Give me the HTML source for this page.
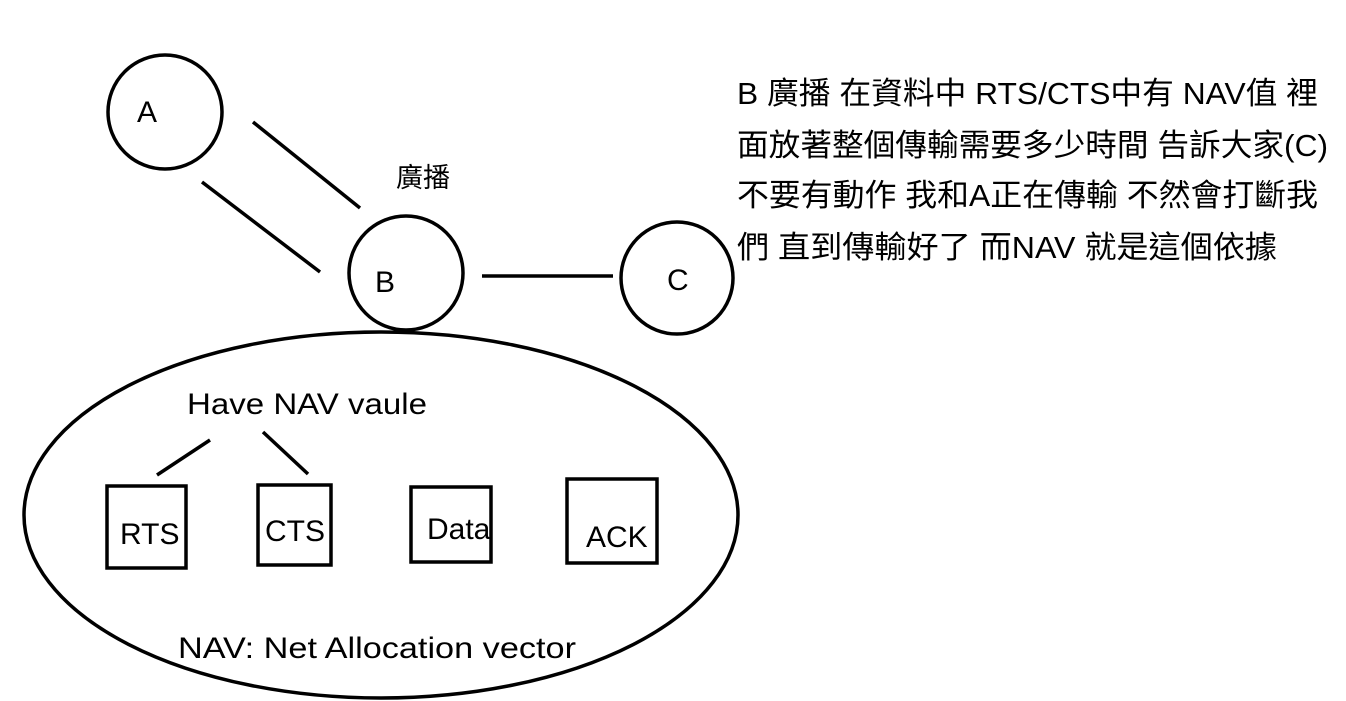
<!DOCTYPE html>
<html><head><meta charset="utf-8"><style>
html,body{margin:0;padding:0;background:#fff;width:1346px;height:701px;overflow:hidden}
svg text{font-family:"Liberation Sans","Noto Sans CJK TC",sans-serif;fill:#000}
</style></head><body>
<svg width="1346" height="701" viewBox="0 0 1346 701" xmlns="http://www.w3.org/2000/svg">
<g fill="none" stroke="#000" stroke-width="3.5">
<circle cx="165" cy="112" r="57"/>
<circle cx="406" cy="273" r="57"/>
<circle cx="677" cy="278" r="56"/>
<ellipse cx="381" cy="515" rx="357" ry="183"/>
<line x1="253" y1="122" x2="360" y2="208"/>
<line x1="202" y1="182" x2="320" y2="272"/>
<line x1="482" y1="276" x2="613" y2="276"/>
<line x1="210" y1="440" x2="157" y2="475"/>
<line x1="263" y1="432" x2="308" y2="474"/>
<rect x="107" y="486" width="79" height="82"/>
<rect x="258" y="485" width="73" height="80"/>
<rect x="411" y="487" width="80" height="75"/>
<rect x="567" y="479" width="90" height="84"/>
</g>
<g font-size="30">
<text x="137" y="122">A</text>
<text x="375" y="292">B</text>
<text x="667" y="290">C</text>
<text x="396" y="187" font-size="27">廣播</text>
<text x="187" y="414" textLength="240" lengthAdjust="spacingAndGlyphs">Have NAV vaule</text>
<text x="120" y="544">RTS</text>
<text x="265" y="541">CTS</text>
<text x="427" y="539">Data</text>
<text x="586" y="547">ACK</text>
<text x="178" y="658" textLength="398" lengthAdjust="spacingAndGlyphs">NAV: Net Allocation vector</text>
</g>
<g font-size="31">
<text x="737" y="104" textLength="581" lengthAdjust="spacingAndGlyphs">B 廣播  在資料中 RTS/CTS中有 NAV值 裡</text>
<text x="737" y="156" textLength="591" lengthAdjust="spacingAndGlyphs">面放著整個傳輸需要多少時間 告訴大家(C)</text>
<text x="737" y="206" textLength="581" lengthAdjust="spacingAndGlyphs">不要有動作 我和A正在傳輸 不然會打斷我</text>
<text x="737" y="258" textLength="540" lengthAdjust="spacingAndGlyphs">們 直到傳輸好了 而NAV 就是這個依據</text>
</g>
</svg>
</body></html>
